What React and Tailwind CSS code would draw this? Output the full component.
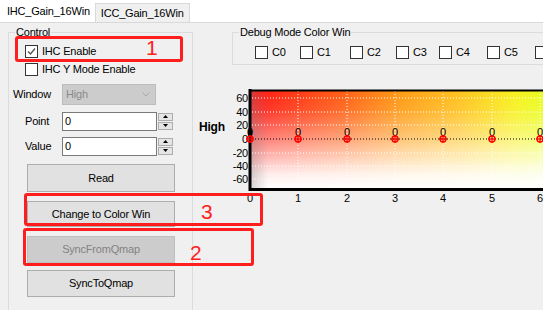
import React from 'react';

const xs = [250, 298, 347, 395, 443, 492, 540];
const ys = [
  { v: '60', y: 98 },
  { v: '40', y: 112 },
  { v: '20', y: 125 },
  { v: '0', y: 139 },
  { v: '-20', y: 153 },
  { v: '-40', y: 166 },
  { v: '-60', y: 179 },
];

function Check({ checked, label, gap = 'ml-[4px]' }) {
  return (
    <div className="flex items-center h-[13px]">
      <div className="w-[13px] h-[13px] shrink-0 border border-[#333333] bg-white flex items-center justify-center">
        {checked && (
          <svg width="9" height="9" viewBox="0 0 9 9">
            <path d="M1 4.5 L3.5 7 L8 1.5" fill="none" stroke="#555555" strokeWidth="1.4" />
          </svg>
        )}
      </div>
      {label && <span className={gap}>{label}</span>}
    </div>
  );
}

function Spinner() {
  return (
    <div className="ml-[1px] w-[15px] h-[18px] flex flex-col gap-[1px]">
      <div className="h-[8px] border border-[#adadad] bg-[#e5e5e5] flex items-center justify-center">
        <svg width="5" height="3" viewBox="0 0 5 3">
          <path d="M0 3 L2.5 0 L5 3 Z" fill="#000" />
        </svg>
      </div>
      <div className="h-[8px] border border-[#adadad] bg-[#e5e5e5] flex items-center justify-center">
        <svg width="5" height="3" viewBox="0 0 5 3">
          <path d="M0 0 L2.5 3 L5 0 Z" fill="#000" />
        </svg>
      </div>
    </div>
  );
}

function Chart() {
  return (
    <svg width="350" height="124" viewBox="193 86 350 124" className="block">
      <defs>
        <linearGradient id="hg" x1="0" y1="0" x2="1" y2="0">
          <stop offset="0%" stopColor="#ff1414" />
          <stop offset="30%" stopColor="#ff5c14" />
          <stop offset="50%" stopColor="#ff9a14" />
          <stop offset="70%" stopColor="#ffc21e" />
          <stop offset="88%" stopColor="#f8f01e" />
          <stop offset="100%" stopColor="#e6ff1e" />
        </linearGradient>
        <linearGradient id="vg" x1="0" y1="0" x2="0" y2="1">
          <stop offset="0%" stopColor="#ffffff" stopOpacity="0" />
          <stop offset="20%" stopColor="#ffffff" stopOpacity="0.1" />
          <stop offset="50%" stopColor="#ffffff" stopOpacity="0.45" />
          <stop offset="85%" stopColor="#ffffff" stopOpacity="0.92" />
          <stop offset="100%" stopColor="#ffffff" stopOpacity="1" />
        </linearGradient>
        <linearGradient id="lg" x1="0" y1="0" x2="1" y2="0">
          <stop offset="0%" stopColor="#808080" stopOpacity="0.35" />
          <stop offset="6%" stopColor="#808080" stopOpacity="0" />
        </linearGradient>
      </defs>

      <rect x="250" y="90" width="300" height="99" fill="url(#hg)" />
      <rect x="250" y="90" width="300" height="99" fill="url(#vg)" />
      <rect x="250" y="90" width="300" height="99" fill="url(#lg)" />

      {ys.filter((t) => t.v !== '0').map((t) => (
        <line key={t.v} x1="252" x2="543" y1={t.y} y2={t.y} stroke="#ffffff" strokeDasharray="1 2" />
      ))}
      {xs.slice(1).map((x) => (
        <line key={x} x1={x} x2={x} y1="91" y2="188" stroke="#ffffff" strokeDasharray="1 2" />
      ))}
      <line x1="252" x2="543" y1="139" y2="139" stroke="#000000" strokeDasharray="1 2" />

      <line x1="249" x2="549" y1="90.5" y2="90.5" stroke="#000" strokeWidth="2" />
      <line x1="250" x2="250" y1="89" y2="191" stroke="#000" strokeWidth="3" />
      <line x1="249" x2="549" y1="189.5" y2="189.5" stroke="#000" strokeWidth="3" />
      <rect x="248" y="130" width="4" height="6" fill="#000" />

      {ys.map((t) => (
        <text key={t.v} x="248" y={t.y + 4} textAnchor="end" fontSize="11" fontFamily="Liberation Sans, Arial, sans-serif" fill="#000">
          {t.v}
        </text>
      ))}
      {xs.map((x, i) => (
        <text key={x} x={x} y="202" textAnchor="middle" fontSize="11" fontFamily="Liberation Sans, Arial, sans-serif" fill="#000">
          {i}
        </text>
      ))}

      {xs.map((x) => (
        <g key={x}>
          <text x={x} y="136" textAnchor="middle" fontSize="11" fontFamily="Liberation Sans, Arial, sans-serif" fill="#000">
            0
          </text>
          <circle cx={x} cy="139" r="3" fill="none" stroke="#ff0000" strokeWidth="1.4" />
          <line x1={x - 4} x2={x + 4} y1="139" y2="139" stroke="#ff0000" strokeWidth="1.2" />
          <line x1={x} x2={x} y1="135" y2="143" stroke="#ff0000" strokeWidth="1.2" />
        </g>
      ))}

      <text x="199" y="131" fontSize="12" fontWeight="bold" fontFamily="Liberation Sans, Arial, sans-serif" fill="#000">
        High
      </text>
    </svg>
  );
}

function App() {
  return (
    <div className="relative w-[543px] h-[310px] overflow-hidden bg-white font-['Liberation_Sans',Arial,sans-serif] text-[11px] tracking-[-0.2px] text-black">
      {/* tabs */}
      <div className="flex items-end h-[23px] border-b border-[#d9d9d9]">
        <div className="ml-[5px] h-[22px] pr-[4px] pl-[2px] flex items-center bg-white">IHC_Gain_16Win</div>
        <div className="ml-[1px] h-[19px] px-[5px] pt-[1px] flex items-center bg-[#f0f0f0] border border-b-0 border-[#d9d9d9]">
          ICC_Gain_16Win
        </div>
      </div>

      <div className="flex bg-[#f0f0f0] h-[287px]">
        {/* Control group */}
        <fieldset className="ml-[8px] mt-[2px] w-[185px] h-[300px] shrink-0 border border-[#dcdcdc] p-0 min-w-0">
          <legend className="ml-[6px] px-[1px] leading-[14px]">Control</legend>
          <div className="flex flex-col">
            <div className="ml-[16px] mt-[6px]">
              <Check checked label="IHC Enable" />
            </div>
            <div className="ml-[16px] mt-[5px]">
              <Check label="IHC Y Mode Enable" />
            </div>

            <div className="mt-[8px] flex items-center h-[21px]">
              <span className="ml-[4px] w-[49px]">Window</span>
              <div className="w-[94px] h-[21px] bg-[#cccccc] border border-[#bcbcbc] flex items-center justify-between pl-[3px] pr-[5px] text-[#8a8a8a]">
                <span>High</span>
                <svg width="8" height="5" viewBox="0 0 8 5">
                  <path d="M0.5 0.5 L4 4 L7.5 0.5" fill="none" stroke="#a8a8a8" strokeWidth="1" />
                </svg>
              </div>
            </div>

            <div className="mt-[7px] flex items-center h-[19px]">
              <span className="ml-[16px] w-[37px]">Point</span>
              <div className="w-[95px] h-[19px] bg-white border border-[#7a7a7a] pl-[2px] flex items-center">0</div>
              <Spinner />
            </div>

            <div className="mt-[6px] flex items-center h-[19px]">
              <span className="ml-[16px] w-[37px]">Value</span>
              <div className="w-[95px] h-[19px] bg-white border border-[#7a7a7a] pl-[2px] flex items-center">0</div>
              <Spinner />
            </div>

            <button className="ml-[18px] mt-[8px] w-[148px] h-[28px] bg-[#e1e1e1] border border-[#adadad]">Read</button>
            <button className="ml-[18px] mt-[9px] w-[148px] h-[26px] bg-[#e1e1e1] border border-[#adadad]">
              Change to Color Win
            </button>
            <button className="ml-[18px] mt-[9px] w-[148px] h-[27px] bg-[#cccccc] border border-[#bfbfbf] text-[#838383]">
              SyncFromQmap
            </button>
            <button className="ml-[18px] mt-[7px] w-[148px] h-[27px] bg-[#e1e1e1] border border-[#adadad]">SyncToQmap</button>
          </div>
        </fieldset>

        {/* right side */}
        <div className="flex flex-col flex-1 min-w-0">
          <fieldset className="ml-[39px] mt-[2px] w-[330px] shrink-0 h-[40px] border border-[#dcdcdc] p-0 min-w-0">
            <legend className="ml-[6px] px-[1px] leading-[14px]">Debug Mode Color Win</legend>
            <div className="flex pl-[22px] mt-[7px]">
              <div className="w-[45px] shrink-0"><Check label="C0" /></div>
              <div className="w-[50px] shrink-0"><Check label="C1" /></div>
              <div className="w-[46px] shrink-0"><Check label="C2" /></div>
              <div className="w-[43px] shrink-0"><Check label="C3" /></div>
              <div className="w-[48px] shrink-0"><Check label="C4" /></div>
              <div className="w-[48px] shrink-0"><Check label="C5" /></div>
              <div className="w-[13px] h-[13px] shrink-0 border border-[#333333] bg-white" />
            </div>
          </fieldset>
          <div className="mt-[21px]">
            <Chart />
          </div>
        </div>
      </div>

      {/* annotations */}
      <div className="absolute left-[15px] top-[36px] w-[168px] h-[26px] border-[3px] border-[#ff1e1e] rounded-[3px]" />
      <div className="absolute left-[24px] top-[193px] w-[239px] h-[33px] border-[3px] border-[#ff1e1e] rounded-[3px]" />
      <div className="absolute left-[23px] top-[228px] w-[231px] h-[38px] border-[3px] border-[#ff1e1e] rounded-[3px]" />
      <span className="absolute left-[146px] top-[37px] text-[21px] leading-none tracking-normal text-[#ff2020]">1</span>
      <span className="absolute left-[201px] top-[201px] text-[21px] leading-none tracking-normal text-[#ff2020]">3</span>
      <span className="absolute left-[190px] top-[242px] text-[21px] leading-none tracking-normal text-[#ff2020]">2</span>
    </div>
  );
}

export default App;
